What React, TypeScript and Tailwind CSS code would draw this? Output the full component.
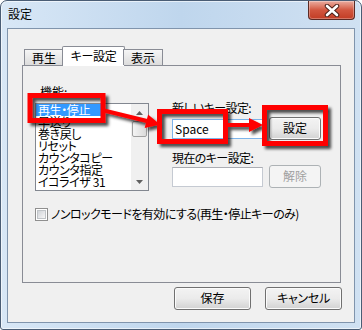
import React from 'react'

const ITEMS = ['再生・停止', '早送り', '巻き戻し', 'リセット', 'カウンタコピー', 'カウンタ指定', 'イコライザ 31']

function Button({ label, disabled, className = '' }: { label: string; disabled?: boolean; className?: string }) {
  return (
    <div
      className={
        'flex h-[23px] items-center justify-center rounded-[3px] border pb-[1px] leading-[14px] ' +
        (disabled
          ? 'border-[#adb2b5] bg-[#f4f4f4] text-[#a0a0a0] '
          : 'border-[#707070] bg-linear-to-b from-[#f3f3f3] via-[#ebebeb] to-[#d2d2d2] text-black shadow-[inset_0_0_0_1px_#fbfbfb] ') +
        className
      }
    >
      {label}
    </div>
  )
}

function TextBox({ value, focused }: { value?: string; focused?: boolean }) {
  return (
    <div
      className={
        'flex h-[20px] w-[91px] items-center border bg-white pl-[2px] leading-[14px] ' +
        (focused ? 'border-[#7eb4ea]' : 'border-[#c5cad2] border-t-[#abadb3]')
      }
    >
      {value}
    </div>
  )
}

function ScrollBar() {
  return (
    <div className="flex w-[17px] flex-col bg-[#f0f0f0]">
      <div className="flex h-[17px] items-center justify-center">
        <svg width="7" height="4" viewBox="0 0 7 4" aria-hidden="true">
          <path d="M0 4 L3.5 0 L7 4 Z" fill="#606060" />
        </svg>
      </div>
      <div className="mx-[1px] h-[16px] rounded-[2px] border border-[#a0a0a0] bg-linear-to-r from-[#f4f4f4] to-[#dadada]" />
      <div className="flex-1" />
      <div className="flex h-[17px] items-center justify-center">
        <svg width="7" height="4" viewBox="0 0 7 4" aria-hidden="true">
          <path d="M0 0 L3.5 4 L7 0 Z" fill="#606060" />
        </svg>
      </div>
    </div>
  )
}

export default function App() {
  return (
    <div className="relative h-[330px] w-[362px] font-['Noto_Sans_CJK_JP',sans-serif] text-[12px] text-black [font-feature-settings:'palt']">
      {/* window frame */}
      <div className="flex h-[330px] w-[362px] flex-col rounded-t-[7px] rounded-b-[3px] border border-[#4a5d75] bg-linear-to-r from-[#d8e7f6] via-[#bfd6ed] to-[#d0e1f2] px-[6px] pb-[6px] shadow-[inset_0_0_0_1px_rgba(255,255,255,0.6)]">
        {/* title bar */}
        <div className="flex h-[27px] items-start justify-between">
          <span className="pl-[1px] pt-[6px] leading-[14px]">設定</span>
          <div className="flex h-[19px] w-[47px] items-center justify-center rounded-b-[4px] border border-t-0 border-[#5b2a24] bg-linear-to-b from-[#e9aca0] via-[#d2563f] to-[#c23c24] shadow-[inset_0_0_0_1px_rgba(255,255,255,0.3)]">
            <svg width="16" height="13" viewBox="0 0 16 13" aria-hidden="true">
              <path d="M3 2 L13 11 M13 2 L3 11" stroke="#4a1f18" strokeWidth="4.5" strokeLinecap="round" />
              <path d="M3 2 L13 11 M13 2 L3 11" stroke="#ffffff" strokeWidth="2.6" strokeLinecap="round" />
            </svg>
          </div>
        </div>

        {/* client area */}
        <div className="flex flex-1 flex-col border border-[#8094ac] bg-[#f0f0f0]">
          {/* tabs */}
          <div className="relative z-10 ml-[14px] mt-[17px] flex items-end pl-[2px]">
            <div className="flex h-[16px] w-[40px] items-center justify-center border border-b-0 border-[#898c95] bg-linear-to-b from-[#f5f5f5] to-[#dcdcdc] leading-[14px]">
              再生
            </div>
            <div className="-mx-[2px] -mb-px flex h-[20px] w-[63px] items-start justify-center rounded-t-[2px] border border-b-0 border-[#898c95] bg-white pt-[2px] leading-[14px] tracking-[-0.3px]">
              キー設定
            </div>
            <div className="flex h-[16px] w-[40px] items-center justify-center border border-b-0 border-[#898c95] bg-linear-to-b from-[#f5f5f5] to-[#dcdcdc] leading-[14px]">
              表示
            </div>
          </div>

          {/* panel */}
          <div className="ml-[14px] flex h-[218px] w-[319px] flex-col border border-[#898c95] bg-[#f0f0f0] pl-[12px] pt-[19px]">
            <div className="flex items-start gap-[23px]">
              <div className="flex w-[114px] flex-col">
                <span className="ml-[5px] leading-[14px]">機能:</span>
                <div className="mt-[4px] flex h-[88px] border border-[#828790] bg-white">
                  <div className="flex flex-1 flex-col tracking-[-0.4px]">
                    {ITEMS.map((item, i) =>
                      i === 0 ? (
                        <div key={item} className="h-[12px]">
                          <span className="block w-[67px] bg-[#3399ff] pl-[2px] leading-[12px] text-white">{item}</span>
                        </div>
                      ) : (
                        <div key={item} className="h-[12px] pl-[2px] leading-[12px]">
                          {item}
                        </div>
                      )
                    )}
                  </div>
                  <ScrollBar />
                </div>
              </div>

              <div className="flex flex-col pt-[16px]">
                <span className="leading-[14px] tracking-[-0.6px]">新しいキー設定:</span>
                <div className="mt-[2px] flex items-center gap-[6px]">
                  <TextBox value="Space" focused />
                  <Button label="設定" className="w-[52px]" />
                </div>
                <span className="mt-[11px] leading-[14px] tracking-[-0.6px]">現在のキー設定:</span>
                <div className="flex items-center gap-[6px]">
                  <TextBox />
                  <Button label="解除" disabled className="w-[52px]" />
                </div>
              </div>
            </div>

            <div className="mt-[16px] flex items-center gap-[3px]">
              <div className="flex h-[13px] w-[13px] items-center justify-center border border-[#8f8f8f] bg-white">
                <div className="h-[9px] w-[9px] border border-[#c0c4c8] bg-linear-to-br from-[#d0d3d8] to-[#f7f7f7]" />
              </div>
              <span className="leading-[14px] tracking-[-0.55px]">ノンロックモードを有効にする(再生・停止キーのみ)</span>
            </div>
          </div>

          {/* dialog buttons */}
          <div className="mt-[4px] flex justify-end gap-[14px] pr-[12px]">
            <Button label="保存" className="w-[77px]" />
            <Button label="キャンセル" className="w-[77px] tracking-[-0.3px]" />
          </div>
        </div>
      </div>

      {/* red annotations */}
      <svg className="pointer-events-none absolute left-0 top-0" width="362" height="330" aria-hidden="true">
        <defs>
          <filter id="shadow" x="-10%" y="-10%" width="130%" height="130%">
            <feDropShadow dx="3" dy="3" stdDeviation="1.6" floodColor="#000" floodOpacity="0.7" />
          </filter>
        </defs>
        <g filter="url(#shadow)">
          <rect x="30" y="95.5" width="73" height="25" fill="none" stroke="#ff0000" strokeWidth="5" />
          <rect x="159.5" y="111.5" width="66" height="30" fill="none" stroke="#ff0000" strokeWidth="5" />
          <rect x="264.5" y="107.5" width="61" height="36" fill="none" stroke="#ff0000" strokeWidth="5" />
          <line x1="104" y1="110.5" x2="147" y2="121" stroke="#ff0000" strokeWidth="4" />
          <polygon points="144.7,128 160,124.5 148.1,114.4" fill="#ff0000" />
          <line x1="228" y1="125" x2="250" y2="125" stroke="#ff0000" strokeWidth="4" />
          <polygon points="249,118 263,125 249,132" fill="#ff0000" />
        </g>
      </svg>
    </div>
  )
}
